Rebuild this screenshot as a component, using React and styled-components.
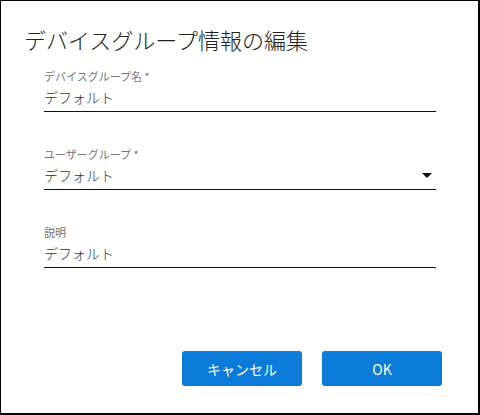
import React from 'react';
import styled, { createGlobalStyle } from 'styled-components';

const GlobalStyle = createGlobalStyle`
  html, body {
    margin: 0;
    padding: 0;
    background: #fff;
  }
  body {
    font-family: "Noto Sans CJK JP", "Noto Sans", sans-serif;
  }
`;

const Dialog = styled.div`
  box-sizing: border-box;
  width: 480px;
  height: 415px;
  border-style: solid;
  border-color: #000;
  border-width: 1px 2px 2px 1px;
  display: flex;
  flex-direction: column;
  background: #fff;
`;

const Title = styled.h2`
  margin: 24px 0 0 23px;
  font-size: 22px;
  line-height: 28px;
  font-weight: 300;
  color: #222;
`;

const Form = styled.div`
  display: flex;
  flex-direction: column;
  gap: 35px;
  padding: 16px 42px 0 43px;
`;

const Field = styled.div`
  display: flex;
  flex-direction: column;
`;

const Label = styled.label`
  font-size: 11px;
  line-height: 14px;
  color: #757575;
`;

const ValueRow = styled.div`
  box-sizing: border-box;
  display: flex;
  align-items: flex-start;
  justify-content: space-between;
  height: 25px;
  margin-top: 4px;
  border-bottom: 1px solid #111;
  font-size: 14px;
  line-height: 20px;
  font-weight: 300;
  color: #333;
`;

const Caret = styled.span`
  width: 0;
  height: 0;
  margin: 8px 4px 0 0;
  border-left: 5px solid transparent;
  border-right: 5px solid transparent;
  border-top: 5px solid #111;
`;

const Actions = styled.div`
  margin-top: auto;
  display: flex;
  justify-content: flex-end;
  gap: 20px;
  padding: 0 36px 27px 0;
`;

const Button = styled.button`
  width: 120px;
  height: 35px;
  border: none;
  border-radius: 3px;
  background: #0a7bd8;
  color: #fff;
  font-family: "Noto Sans CJK JP", "Noto Sans", sans-serif;
  font-size: 14px;
  cursor: pointer;
`;

const fields = [
  { label: 'デバイスグループ名 *', value: 'デフォルト' },
  { label: 'ユーザーグループ *', value: 'デフォルト', select: true },
  { label: '説明', value: 'デフォルト' },
];

export default function App() {
  return (
    <>
      <GlobalStyle />
      <Dialog>
        <Title>デバイスグループ情報の編集</Title>
        <Form>
          {fields.map((f) => (
            <Field key={f.label}>
              <Label>{f.label}</Label>
              <ValueRow>
                <span>{f.value}</span>
                {f.select && <Caret />}
              </ValueRow>
            </Field>
          ))}
        </Form>
        <Actions>
          <Button>キャンセル</Button>
          <Button>OK</Button>
        </Actions>
      </Dialog>
    </>
  );
}
